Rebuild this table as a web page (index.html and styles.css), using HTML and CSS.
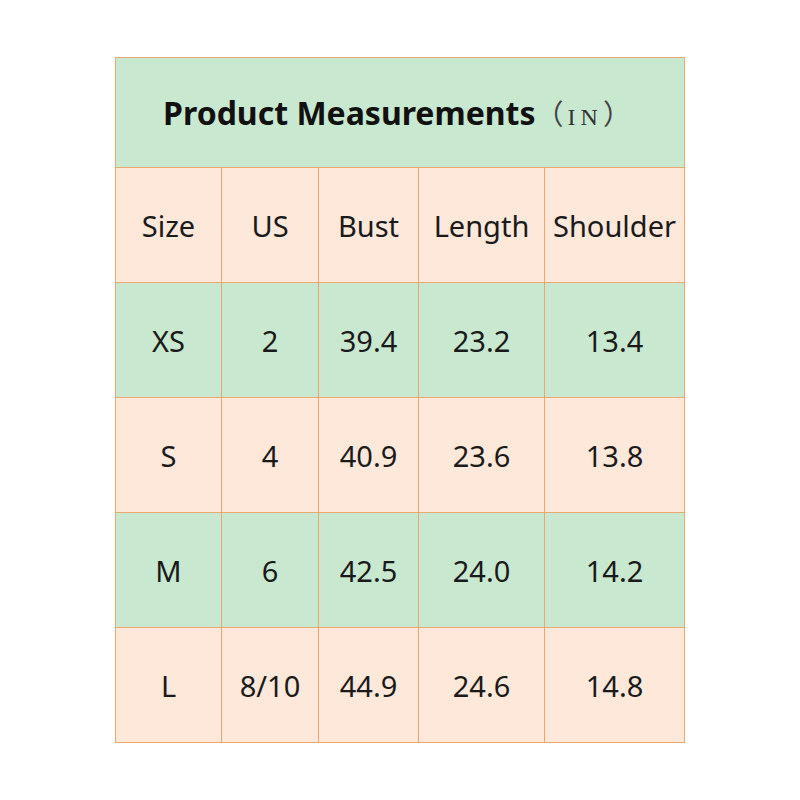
FILE: index.html
```html
<!DOCTYPE html>
<html>
<head>
<meta charset="utf-8">
<link rel="stylesheet" href="styles.css">
</head>
<body>
<div class="page">
  <table class="sizes">
    <colgroup>
      <col class="c1"><col class="c2"><col class="c3"><col class="c4"><col class="c5">
    </colgroup>
    <tr class="title-row">
      <th colspan="5"><span class="title">Product Measurements</span><span class="unit">（<span class="unit-letters">IN</span>）</span></th>
    </tr>
    <tr class="peach">
      <td>Size</td><td>US</td><td>Bust</td><td>Length</td><td>Shoulder</td>
    </tr>
    <tr class="green">
      <td>XS</td><td>2</td><td>39.4</td><td>23.2</td><td>13.4</td>
    </tr>
    <tr class="peach">
      <td>S</td><td>4</td><td>40.9</td><td>23.6</td><td>13.8</td>
    </tr>
    <tr class="green">
      <td>M</td><td>6</td><td>42.5</td><td>24.0</td><td>14.2</td>
    </tr>
    <tr class="peach">
      <td>L</td><td>8/10</td><td>44.9</td><td>24.6</td><td>14.8</td>
    </tr>
  </table>
</div>
</body>
</html>
```

FILE: styles.css
```css
html, body {
  margin: 0;
  padding: 0;
  background: #ffffff;
}

.page {
  padding: 57px 0 0 115px;
}

.sizes {
  border-collapse: collapse;
  table-layout: fixed;
  width: 569px;
  font-family: "Noto Sans", "Open Sans", sans-serif;
  color: #1a1a1a;
}

.c1 { width: 106px; }
.c2 { width: 97px; }
.c3 { width: 100px; }
.c4 { width: 126px; }
.c5 { width: 140px; }

.sizes th,
.sizes td {
  border: 1px solid #eba86e;
  text-align: center;
  vertical-align: middle;
  padding: 0;
}

.title-row th {
  height: 109px;
  padding-right: 6px;
  background: #c9e8d0;
  font-weight: 700;
  white-space: nowrap;
}

.title {
  font-size: 32px;
  font-weight: 700;
  color: #111;
}

.unit {
  font-family: "Noto Sans CJK SC", sans-serif;
  font-weight: 400;
  font-size: 28px;
  color: #444;
}

.unit-letters {
  font-family: "Liberation Serif", serif;
  font-size: 24px;
  letter-spacing: 5px;
  padding-left: 4px;
  color: #333;
}

.sizes td {
  height: 114px;
  font-size: 29px;
}

.peach td { background: #fde8da; }
.green td { background: #c9e8d0; }
```
